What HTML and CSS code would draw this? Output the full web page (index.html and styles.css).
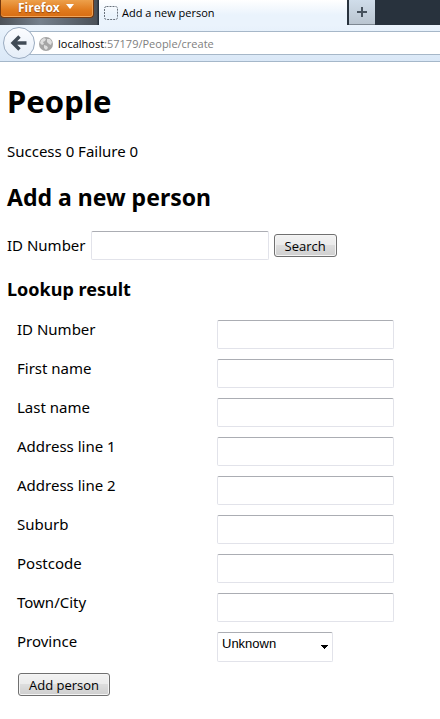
FILE: index.html
```html
<!DOCTYPE html>
<html lang="en">
<head>
<meta charset="utf-8">
<title>Add a new person</title>
<link rel="stylesheet" href="styles.css">
</head>
<body>
<header class="browser">
  <div class="tabstrip">
    <button type="button" class="firefox">Firefox
      <svg width="8" height="5" viewBox="0 0 8 5" aria-hidden="true"><path d="M0 0h8L4 5z" fill="#fff"/></svg>
    </button>
    <div class="tab">
      <svg width="14" height="14" viewBox="0 0 14 14" aria-hidden="true"><rect x=".5" y=".5" width="13" height="13" rx="2" fill="none" stroke="#68717b" stroke-dasharray="2 1"/></svg>
      <span>Add a new person</span>
    </div>
    <button type="button" class="newtab" aria-label="New tab">
      <svg width="12" height="12" viewBox="0 0 12 12" aria-hidden="true"><path d="M5 1h2v4h4v2H7v4H5V7H1V5h4z" fill="#47525d"/></svg>
    </button>
  </div>
  <div class="toolbar">
    <button type="button" class="back" aria-label="Back">
      <svg width="18" height="18" viewBox="0 0 18 18" aria-hidden="true"><path d="M9.5 2.5L3 9l6.500 6.500M3.500 9H16.500" fill="none" stroke="#414b56" stroke-width="3.400"/></svg>
    </button>
    <div class="address">
      <svg width="14" height="14" viewBox="0 0 14 14" aria-hidden="true"><circle cx="7" cy="7" r="7" fill="#a5a5a5"/><path d="M2 3l3-2 2 1-1 2-2 1 1 2-2 1-2-2zM8 2l3 0 2 3-1 3-2-1-2-2zM5 8l3 1 1 2-2 2-2-2z" fill="#dedede"/></svg>
      <span class="url"><span class="host">localhost</span>:57179/People/create</span>
    </div>
  </div>
</header>
<main>
  <h1>People</h1>
  <p>Success 0 Failure 0</p>
  <h2>Add a new person</h2>
  <form class="search">
    <label for="lookup">ID Number</label>
    <input id="lookup" type="text">
    <button type="button" class="btn">Search</button>
  </form>
  <h3>Lookup result</h3>
  <form class="person">
    <div class="row"><label for="idn">ID Number</label><input id="idn" type="text"></div>
    <div class="row"><label for="first">First name</label><input id="first" type="text"></div>
    <div class="row"><label for="last">Last name</label><input id="last" type="text"></div>
    <div class="row"><label for="addr1">Address line 1</label><input id="addr1" type="text"></div>
    <div class="row"><label for="addr2">Address line 2</label><input id="addr2" type="text"></div>
    <div class="row"><label for="suburb">Suburb</label><input id="suburb" type="text"></div>
    <div class="row"><label for="postcode">Postcode</label><input id="postcode" type="text"></div>
    <div class="row"><label for="town">Town/City</label><input id="town" type="text"></div>
    <div class="row"><label for="province">Province</label>
      <div class="select">
        <select id="province"><option>Unknown</option></select>
        <svg width="7" height="4" viewBox="0 0 7 4" aria-hidden="true"><path d="M0 0h7v1H6v1H5v1H4v1H3V3H2V2H1V1H0z"/></svg>
      </div>
    </div>
    <button type="button" class="btn">Add person</button>
  </form>
</main>
</body>
</html>
```
FILE: styles.css
```css
* { box-sizing: border-box; }
body {
  margin: 0;
  background: #fff;
  color: #000;
  font: 15px/22px "Noto Sans", sans-serif;
}
button { font-family: inherit; padding: 0; }
svg { display: block; flex: none; }

/* Browser frame */
.browser { font: 11px/16px "Open Sans", sans-serif; }
.tabstrip {
  display: flex;
  height: 25px;
  background: linear-gradient(90deg, #4c5158, #75808c 40px, #4b5158 97px, #28323d 98px);
}
.firefox {
  display: flex;
  align-items: flex-start;
  gap: 6px;
  width: 94px;
  height: 18px;
  padding: 0 0 0 17px;
  border: 1px solid #74370d;
  border-top: 0;
  border-radius: 0 0 4px 4px;
  background: linear-gradient(#eda04b, #e07a1d 60%, #d76c12);
  box-shadow: inset 0 -1px #f0a65c, inset -1px 0 #eda356;
  color: #fff;
  font: bold 12px/16px "Open Sans", sans-serif;
  text-shadow: 0 1px 1px #92450d;
}
.firefox svg { margin-top: 4px; }
.tab {
  display: flex;
  align-items: center;
  gap: 4px;
  width: 248px;
  margin-left: 5px;
  padding: 1px 0 0 5px;
  background: linear-gradient(#fff, #eaf3fc 60%);
}
.newtab {
  display: grid;
  place-items: center;
  width: 26px;
  height: 25px;
  margin-left: 2px;
  border: 0;
  border-bottom: 1px solid #7d8791;
  background: linear-gradient(#d0ddea, #bac5d0);
}
.toolbar {
  display: flex;
  align-items: center;
  height: 37px;
  padding-left: 3px;
  border-bottom: 1px solid #a5b7c9;
  background: linear-gradient(#eaf3fc, #dae8f7);
}
.back {
  display: grid;
  place-items: center;
  z-index: 1;
  width: 32px;
  height: 32px;
  border: 1px solid #9aabc0;
  border-radius: 50%;
  background: linear-gradient(#fcfdff, #e5eef8);
}
.address {
  display: flex;
  flex: 1;
  align-items: center;
  gap: 5px;
  height: 24px;
  margin-left: -8px;
  padding: 1px 0 0 12px;
  border: 1px solid #a6b7c8;
  border-width: 1px 0;
  background: #fff;
}
.url { color: #808080; }
.host { color: #000; }

/* Page */
main { padding: 18px 7px; }
h1, h2, h3, p { margin: 0; }
h1 { font-size: 31px; line-height: 42px; }
p { margin-top: 18px; }
h2 { margin-top: 18px; font-size: 23px; line-height: 34px; }
h3 { margin-top: 16px; font-size: 18px; line-height: 26px; }
input, select {
  width: 177px;
  height: 29px;
  padding: 0 4px;
  border: 1px solid #e2e3ea;
  border-top-color: #abadb3;
  border-radius: 2px;
  background: #fff;
  color: #000;
  font: 13px/17px "Liberation Sans", sans-serif;
}
.search { display: flex; align-items: center; gap: 5px; margin-top: 17px; }
.search input { width: 178px; }
.search label { padding-bottom: 2px; }
.btn {
  height: 23px;
  padding: 0 10px;
  border: 1px solid #707070;
  border-radius: 3px;
  background: linear-gradient(#f2f2f2, #ebebeb 50%, #dddddd 50%, #cfcfcf);
  box-shadow: inset 0 0 0 1px #f5f5f5;
  color: #000;
  font: 13px/18px "Open Sans", sans-serif;
}
.person { margin-top: 18px; padding-left: 10px; }
.row { display: grid; grid-template-columns: 200px 1fr; margin-bottom: 10px; }
.row label { line-height: 18px; }
.select { display: grid; width: 116px; }
.select > * { grid-area: 1 / 1; }
select { width: 116px; height: 30px; padding: 0 0 8px 4px; appearance: none; }
.select svg { place-self: center end; margin-right: 5px; pointer-events: none; }
.person .btn { margin: 1px 0 0 1px; }
```
